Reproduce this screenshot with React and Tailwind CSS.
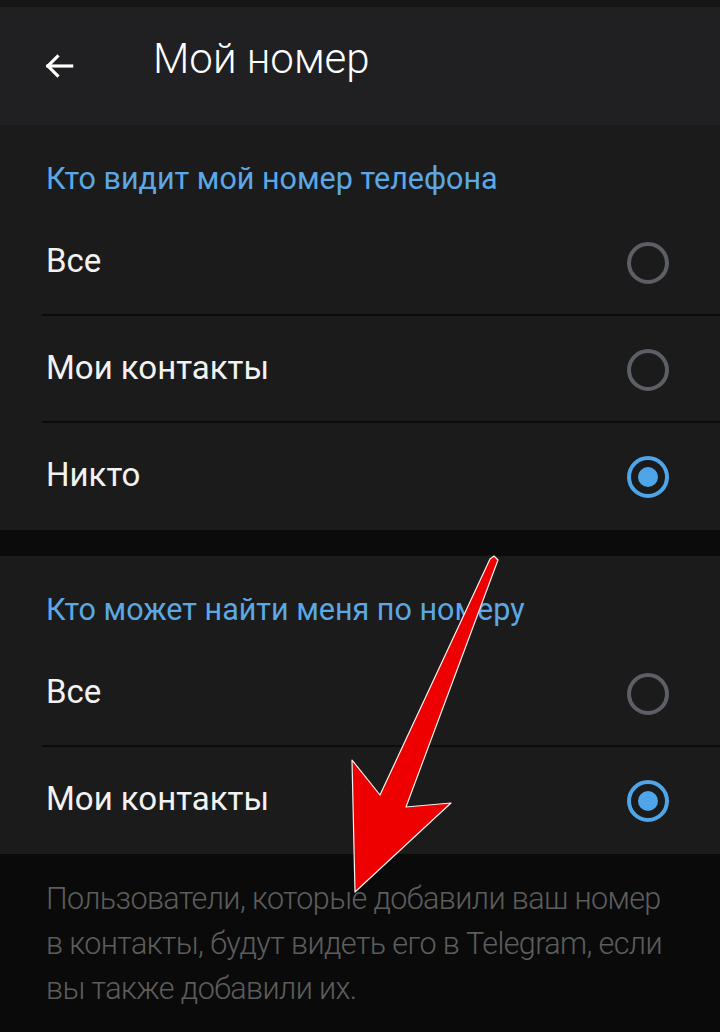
import React from 'react'

const Radio = ({ checked }) => {
  if (checked) {
    return (
      <div className="w-[42px] h-[42px] rounded-full border-[4px] border-[#4ea5e8] flex items-center justify-center">
        <div className="w-[20px] h-[20px] rounded-full bg-[#4ea5e8]"></div>
      </div>
    )
  }
  return <div className="w-[42px] h-[42px] rounded-full border-[4px] border-[#5c6066]"></div>
}

const Row = ({ label, checked, divider }) => (
  <div className="relative h-[107px] flex items-center justify-between pl-[46px] pr-[51px]">
    <span className="text-[33px] leading-none pb-[5px] text-[#f2f2f2]">{label}</span>
    <Radio checked={checked} />
    {divider && <div className="absolute left-[42px] right-0 bottom-0 h-[2px] bg-[#0c0c0c]"></div>}
  </div>
)

const Section = ({ title, children }) => (
  <div className="bg-[#1b1b1b]">
    <div className="h-[84px] flex items-end pl-[46px] pb-[12px]">
      <span className="text-[30.5px] leading-none pb-[3px] text-[#5ba8e4]">{title}</span>
    </div>
    {children}
  </div>
)

export default function App() {
  return (
    <div className="relative w-[720px] h-[1032px] bg-[#0a0a0a] overflow-hidden font-['Roboto','Noto_Sans',sans-serif]">
      <div className="h-[7px] bg-[#161616]"></div>
      <div className="h-[118px] bg-[#202022] flex items-center">
        <div className="w-[153px] pl-[40px] flex items-center">
          <svg width="38" height="38" viewBox="0 0 24 24" fill="none" stroke="#ffffff" strokeWidth="2" strokeLinecap="square">
            <path d="M20 12H5" />
            <path d="M11 6l-6 6 6 6" />
          </svg>
        </div>
        <span className="text-[42px] leading-none font-light text-white pb-[14px]">Мой номер</span>
      </div>

      <Section title="Кто видит мой номер телефона">
        <Row label="Все" divider />
        <Row label="Мои контакты" divider />
        <Row label="Никто" checked />
      </Section>

      <div className="h-[26px] bg-[#0b0b0b]"></div>

      <Section title="Кто может найти меня по номеру">
        <Row label="Все" divider />
        <Row label="Мои контакты" checked />
      </Section>

      <div className="pl-[46px] pr-[20px] pt-[22px] text-[30.5px] leading-[45px] font-light text-[#5d5d5d] tracking-[-0.6px] whitespace-nowrap">
        Пользователи, которые добавили ваш номер
        <br />
        в контакты, будут видеть его в Telegram, если
        <br />
        вы также добавили их.
      </div>

      <svg className="absolute left-0 top-0 pointer-events-none" width="720" height="1032" viewBox="0 0 720 1032">
        <polygon
          points="490,559 494,556 498,560 406,807 451,803 355,892 352,760 380,795"
          fill="#ee0000"
          stroke="#f2f2f2"
          strokeWidth="1.2"
          strokeLinejoin="round"
        />
      </svg>
    </div>
  )
}
